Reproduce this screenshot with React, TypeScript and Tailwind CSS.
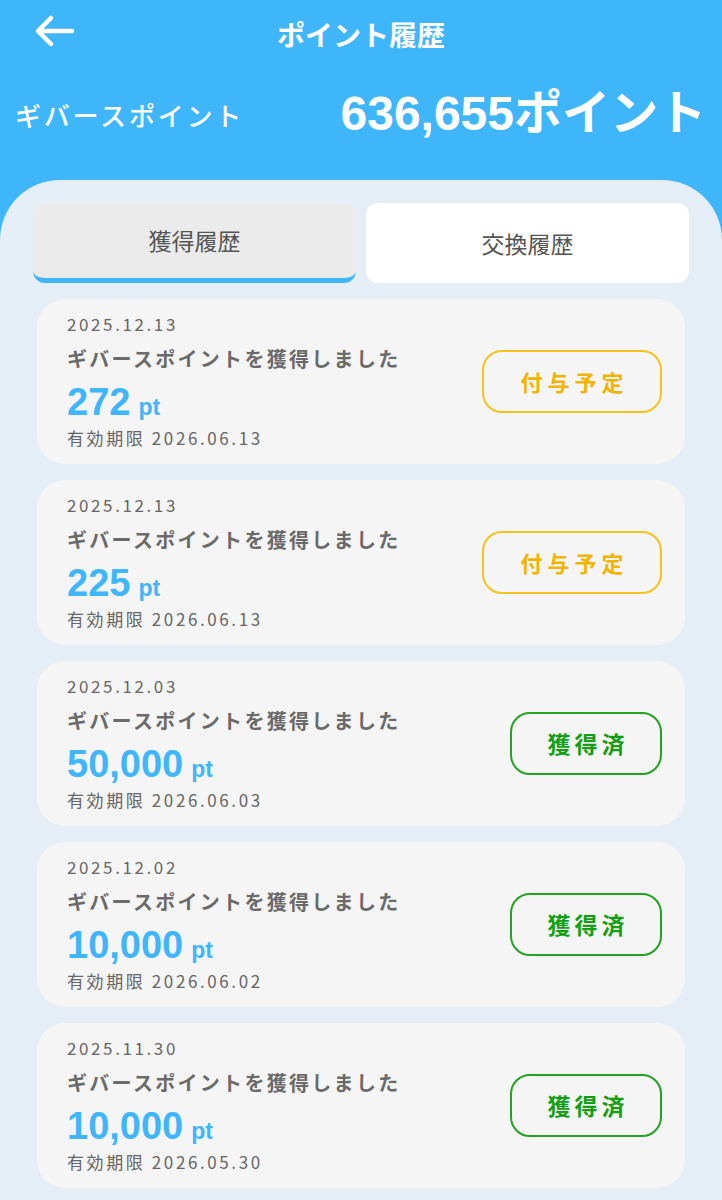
import React, { useState } from 'react';

type Entry = {
  date: string;
  amount: string;
  expires: string;
  status: 'pending' | 'done';
};

const ENTRIES: Entry[] = [
  { date: '2025.12.13', amount: '272', expires: '2026.06.13', status: 'pending' },
  { date: '2025.12.13', amount: '225', expires: '2026.06.13', status: 'pending' },
  { date: '2025.12.03', amount: '50,000', expires: '2026.06.03', status: 'done' },
  { date: '2025.12.02', amount: '10,000', expires: '2026.06.02', status: 'done' },
  { date: '2025.11.30', amount: '10,000', expires: '2026.05.30', status: 'done' },
];

const FONT = "font-['Noto_Sans_CJK_JP','Noto_Sans',sans-serif]";
const NUM_FONT = "font-['Liberation_Sans','Noto_Sans_CJK_JP',sans-serif]";

const StatusBadge: React.FC<{ status: Entry['status'] }> = ({ status }) =>
  status === 'pending' ? (
    <div className="w-[180px] h-[63px] rounded-[20px] border-2 border-[#f6c21c] flex items-center justify-center text-[22px] font-bold tracking-[5px] pl-[5px] text-[#f2b400]">
      付与予定
    </div>
  ) : (
    <div className="w-[152px] h-[63px] rounded-[20px] border-2 border-[#22a322] flex items-center justify-center text-[23px] font-bold tracking-[4px] pl-[4px] text-[#12a012]">
      獲得済
    </div>
  );

const App: React.FC = () => {
  const [tab, setTab] = useState<'earn' | 'exchange'>('earn');

  const tabClass = (active: boolean) =>
    `flex-1 h-[80px] rounded-[12px] text-[23px] text-[#555] flex items-center justify-center ${
      active ? 'bg-[#ebebeb] border-b-[5px] border-[#3fb6f9]' : 'bg-white'
    }`;

  return (
    <div className={`${FONT} w-[722px] min-h-[1200px] bg-[#3fb6f9]`}>
      {/* Header */}
      <div className="h-[180px] flex flex-col text-white">
        <div className="relative h-[64px] flex items-center justify-center">
          <button className="absolute left-[34px] top-[14px]">
            <svg width="42" height="34" viewBox="0 0 42 34" fill="none" stroke="white" strokeWidth="4.5" strokeLinecap="round" strokeLinejoin="round">
              <path d="M38 17H5" />
              <path d="M17 4L4 17l13 13" />
            </svg>
          </button>
          <h1 className="text-[28px] font-bold mt-[4px]">ポイント履歴</h1>
        </div>
        <div className="flex items-center justify-between pl-[15px] pr-[16px] mt-[26px]">
          <span className="text-[26px] font-medium tracking-[2.8px]">ギバースポイント</span>
          <span className={`${NUM_FONT} text-[48px] font-bold leading-none`}>636,655ポイント</span>
        </div>
      </div>

      {/* Panel */}
      <div className="bg-[#e5eef6] rounded-t-[60px] pt-[23px] pb-[16px] min-h-[1020px]">
        <div className="flex gap-[10px] px-[33px]">
          <button onClick={() => setTab('earn')} className={tabClass(tab === 'earn')}>
            獲得履歴
          </button>
          <button onClick={() => setTab('exchange')} className={tabClass(tab === 'exchange')}>
            交換履歴
          </button>
        </div>

        <div className="flex flex-col gap-[16px] px-[37px] mt-[16px]">
          {ENTRIES.map((e, i) => (
            <div key={i} className="h-[165px] bg-[#f5f5f5] rounded-[28px] pl-[30px] pr-[23px] flex justify-between">
              <div className="flex flex-col pt-[13px] text-[#666]">
                <span className="text-[17px] leading-[24px] tracking-[2.6px]">{e.date}</span>
                <span className="text-[20px] leading-[28px] font-bold tracking-[2.3px] mt-[9px] text-[#6a6a6a]">ギバースポイントを獲得しました</span>
                <div className={`${NUM_FONT} h-[44px] mt-[7px] flex items-baseline font-bold text-[#3fb6f9] leading-[44px]`}>
                  <span className="text-[38px]">{e.amount}</span>
                  <span className="text-[23px] ml-[8px]">pt</span>
                </div>
                <span className="text-[17px] leading-[24px] tracking-[2.6px] mt-[2px]">有効期限 {e.expires}</span>
              </div>
              <div className="self-center">
                <StatusBadge status={e.status} />
              </div>
            </div>
          ))}
        </div>
      </div>
    </div>
  );
};

export default App;
